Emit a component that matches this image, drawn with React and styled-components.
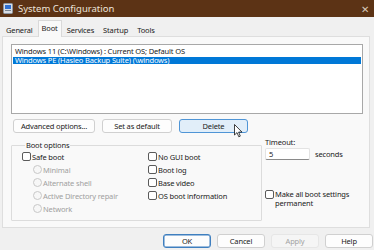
import styled, { createGlobalStyle } from "styled-components";

const GlobalStyle = createGlobalStyle`
  html, body { margin: 0; padding: 0; background: #f0f0f0; }
  body { font-family: "Noto Sans", "Open Sans", sans-serif; }
  * { box-sizing: border-box; }
`;

const Window = styled.div`
  position: relative;
  width: 374px;
  height: 250px;
  overflow: hidden;
  background: #f0f0f0;
  font-size: 7.5px;
  letter-spacing: -0.15px;
  color: #1a1a1a;
  display: flex;
  flex-direction: column;
`;

const TitleBar = styled.div`
  height: 17px;
  background: #5c3315;
  display: flex;
  align-items: center;
  padding: 0 4px 0 3px;
  color: #ece3da;
  font-size: 9.5px;
  letter-spacing: 0;
`;

const TitleText = styled.span`
  margin-left: 5px;
  flex: 1;
`;

const Close = styled.span`
  font-size: 10px;
  color: #d8c8ba;
  margin-right: 1px;
`;

const Tabs = styled.div`
  display: flex;
  align-items: flex-end;
  height: 19px;
  padding-left: 2px;
`;

const Tab = styled.div`
  padding: 0 3px;
  height: ${(p) => (p.$active ? "17px" : "15px")};
  line-height: 15px;
  margin-right: 1px;
  background: ${(p) => (p.$active ? "#f9f9f9" : "transparent")};
  border: 1px solid ${(p) => (p.$active ? "#d9d9d9" : "transparent")};
  border-bottom: none;
  position: relative;
  top: 1px;
`;

const Panel = styled.div`
  margin: 0 4px 0 2px;
  height: 192px;
  background: #f9f9f9;
  border: 1px solid #dedede;
  display: flex;
  flex-direction: column;
  padding: 7px 6px 0 8px;
`;

const ListBox = styled.div`
  height: 70px;
  background: #fff;
  border: 1px solid #a8a8a8;
  padding: 1px 1px;
`;

const ListItem = styled.div`
  height: 7.5px;
  line-height: 7.5px;
  padding-left: 2px;
  white-space: nowrap;
  background: ${(p) => (p.$selected ? "#0078d7" : "transparent")};
  color: ${(p) => (p.$selected ? "#fff" : "#1a1a1a")};
  margin-top: ${(p) => (p.$selected ? "1px" : "2px")};
`;

const ButtonRow = styled.div`
  display: flex;
  gap: 7px;
  margin: 5px 0 0 2px;
`;

const Button = styled.div`
  width: ${(p) => p.$w}px;
  height: 14px;
  display: flex;
  align-items: center;
  justify-content: center;
  border-radius: 3px;
  background: ${(p) => (p.$hover ? "#e1eef9" : p.$disabled ? "#f5f5f5" : "#fdfdfd")};
  color: ${(p) => (p.$disabled ? "#a3a3a3" : "#1a1a1a")};
  border: 1px solid
    ${(p) =>
      p.$hover ? "#4f95d6" : p.$primary ? "#3f7fbf" : p.$disabled ? "#e6e6e6" : "#d0d0d0"};
  box-shadow: ${(p) => (p.$primary ? "inset 0 0 0 0.5px #3f7fbf" : "none")};
`;

const Lower = styled.div`
  display: flex;
  margin-top: 7px;
`;

const GroupBox = styled.fieldset`
  width: 251px;
  height: 81px;
  margin: 0;
  padding: 0 0 0 10px;
  border: 1px solid #dcdcdc;
  border-radius: 1px;
  display: grid;
  grid-template-columns: 126px 1fr;
`;

const Legend = styled.legend`
  padding: 0 1px;
  margin-left: 3px;
`;

const Column = styled.div`
  display: flex;
  flex-direction: column;
  gap: 3.5px;
  padding-top: ${(p) => p.$pt || 0}px;
`;

const Option = styled.label`
  display: flex;
  align-items: center;
  gap: 1px;
  height: 9.5px;
  color: ${(p) => (p.$disabled ? "#a0a0a0" : "#1a1a1a")};
  margin-left: ${(p) => p.$indent || 0}px;
  white-space: nowrap;
  line-height: 1.1;
`;

const Check = styled.span`
  width: 9px;
  height: 9px;
  border: 1px solid #5a5a5a;
  border-radius: 2px;
  background: #fff;
  flex: none;
`;

const Radio = styled.span`
  width: 9px;
  height: 9px;
  border: 1px solid #c8c8c8;
  border-radius: 50%;
  background: #f7f7f7;
  flex: none;
`;

const RightSide = styled.div`
  margin-left: 3px;
  display: flex;
  flex-direction: column;
`;

const Label = styled.div`
  height: 9px;
  line-height: 9px;
  margin-top: -2px;
`;

const TimeoutRow = styled.div`
  display: flex;
  align-items: center;
  gap: 5px;
  margin-top: 1px;
`;

const Input = styled.div`
  width: 45px;
  height: 12px;
  background: #fff;
  border: 1px solid #e3e3e3;
  border-bottom: 1px solid #8a8a8a;
  border-radius: 2px;
  padding-left: 3px;
  line-height: 10px;
`;

const PermanentOption = styled.div`
  display: flex;
  gap: 1px;
  margin-top: 30px;
  line-height: 8.5px;
`;

const Footer = styled.div`
  display: flex;
  justify-content: flex-end;
  gap: 6px;
  padding: 6px 1px 0 0;
`;

const Cursor = styled.svg`
  position: absolute;
  left: 234px;
  top: 124px;
`;

function AppIcon() {
  return (
    <svg width="10" height="11" viewBox="0 0 10 11">
      <rect x="0.5" y="0.5" width="9" height="10" rx="1" fill="#d9dde3" stroke="#8d96a3" />
      <rect x="2" y="2" width="6" height="4" fill="#2f6fd0" />
      <rect x="2" y="7" width="6" height="1" fill="#7a8694" />
    </svg>
  );
}

export default function App() {
  return (
    <>
      <GlobalStyle />
      <Window>
        <TitleBar>
          <AppIcon />
          <TitleText>System Configuration</TitleText>
          <Close>✕</Close>
        </TitleBar>
        <Tabs>
          <Tab>General</Tab>
          <Tab $active>Boot</Tab>
          <Tab>Services</Tab>
          <Tab>Startup</Tab>
          <Tab>Tools</Tab>
        </Tabs>
        <Panel>
          <ListBox>
            <ListItem>Windows 11 (C:\Windows) : Current OS; Default OS</ListItem>
            <ListItem $selected>Windows PE (Hasleo Backup Suite) (\windows)</ListItem>
          </ListBox>
          <ButtonRow>
            <Button $w={82}>Advanced options...</Button>
            <Button $w={70}>Set as default</Button>
            <Button $w={69} $hover>Delete</Button>
          </ButtonRow>
          <Lower>
            <GroupBox>
              <Legend>Boot options</Legend>
              <Column $pt={2}>
                <Option>
                  <Check />
                  Safe boot
                </Option>
                <Option $disabled $indent={11}>
                  <Radio />
                  Minimal
                </Option>
                <Option $disabled $indent={11}>
                  <Radio />
                  Alternate shell
                </Option>
                <Option $disabled $indent={11}>
                  <Radio />
                  Active Directory repair
                </Option>
                <Option $disabled $indent={11}>
                  <Radio />
                  Network
                </Option>
              </Column>
              <Column $pt={2}>
                <Option>
                  <Check />
                  No GUI boot
                </Option>
                <Option>
                  <Check />
                  Boot log
                </Option>
                <Option>
                  <Check />
                  Base video
                </Option>
                <Option>
                  <Check />
                  OS boot information
                </Option>
              </Column>
            </GroupBox>
            <RightSide>
              <Label>Timeout:</Label>
              <TimeoutRow>
                <Input>5</Input>
                <span>seconds</span>
              </TimeoutRow>
              <PermanentOption>
                <Check />
                <span>
                  Make all boot settings
                  <br />
                  permanent
                </span>
              </PermanentOption>
            </RightSide>
          </Lower>
        </Panel>
        <Footer>
          <Button $w={48} $primary>OK</Button>
          <Button $w={48}>Cancel</Button>
          <Button $w={48} $disabled>Apply</Button>
          <Button $w={48}>Help</Button>
        </Footer>
        <Cursor width="9" height="14" viewBox="0 0 9 14">
          <path d="M0.5 0.5 L0.5 11 L3 8.6 L4.8 12.8 L6.3 12.1 L4.6 8.1 L8 8.1 Z" fill="#fff" stroke="#111" strokeWidth="0.8" strokeLinejoin="round" />
        </Cursor>
      </Window>
    </>
  );
}
